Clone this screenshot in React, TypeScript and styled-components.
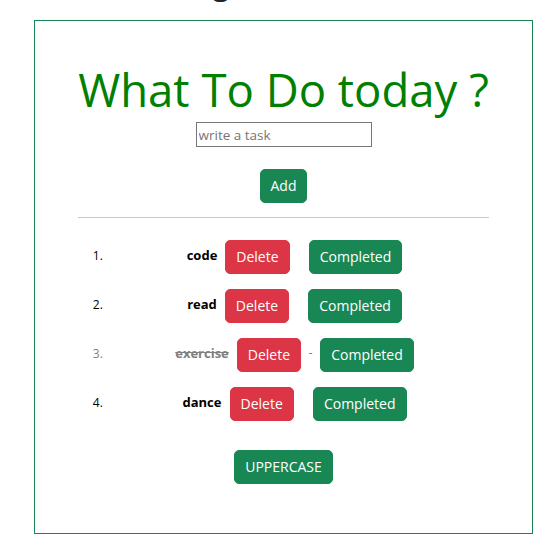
import React, { useState } from "react";
import styled, { createGlobalStyle } from "styled-components";

const GlobalStyle = createGlobalStyle`
  html, body {
    margin: 0;
    padding: 0;
    background: #ffffff;
    overflow: hidden;
  }
  body {
    font-family: "Open Sans", "Noto Sans", sans-serif;
    color: #212529;
  }
`;

const Page = styled.div`
  width: 560px;
  height: 550px;
  overflow: hidden;
`;

const PageHeading = styled.h2`
  margin: -37px 0 19px;
  padding: 0 112px 0 34px;
  font-size: 32px;
  font-weight: 500;
  line-height: 38px;
  text-align: center;
  white-space: nowrap;
  color: #212529;
`;

const Card = styled.div`
  box-sizing: border-box;
  width: 499px;
  margin-left: 34px;
  padding: 0 43px 49px;
  border: 1px solid #198754;
`;

const Title = styled.h1`
  margin: 41px 0 0;
  font-size: 45.5px;
  font-weight: 400;
  line-height: 55px;
  text-align: center;
  white-space: nowrap;
  color: #008000;
`;

const InputRow = styled.div`
  display: flex;
  justify-content: center;
  margin-top: 5px;
`;

const TaskInput = styled.input`
  box-sizing: border-box;
  width: 176px;
  height: 25px;
  padding: 1px 2px;
  border: 1px solid #767676;
  border-radius: 0;
  font-family: "Open Sans", "Noto Sans", sans-serif;
  font-size: 13.5px;
  color: #212529;
  outline: none;
  &::placeholder {
    color: #757575;
  }
`;

const ButtonRow = styled.div<{ $top: number }>`
  display: flex;
  justify-content: center;
  margin-top: ${(p) => p.$top}px;
`;

const Button = styled.button<{ $variant?: "success" | "danger" }>`
  display: inline-block;
  box-sizing: border-box;
  padding: 6px 10px;
  border: 1px solid ${(p) => (p.$variant === "danger" ? "#dc3545" : "#198754")};
  border-radius: 5px;
  background: ${(p) => (p.$variant === "danger" ? "#dc3545" : "#198754")};
  color: #ffffff;
  font-family: "Open Sans", "Noto Sans", sans-serif;
  font-size: 14px;
  font-weight: 400;
  line-height: 20px;
  cursor: pointer;
`;

const RowButton = styled(Button)<{ $gap: "both" | "left" }>`
  margin: ${(p) => (p.$gap === "both" ? "0 8px" : "0 0 0 8px")};
  vertical-align: -2px;
  text-decoration: none;
`;

const Divider = styled.hr`
  margin: 14px 0 0;
  border: 0;
  border-top: 1px solid #c9c9c9;
  height: 0;
`;

const TaskList = styled.ol`
  margin: 20px 0 0;
  padding: 0 0 0 28px;
`;

const TaskItem = styled.li<{ $done: boolean }>`
  padding-right: 6px;
  font-size: 12px;
  line-height: 34px;
  text-align: center;
  color: ${(p) => (p.$done ? "#808080" : "#000000")};
  text-decoration: ${(p) => (p.$done ? "line-through" : "none")};
  & + & {
    margin-top: 13px;
  }
`;

const TaskName = styled.span`
  font-size: 13px;
  font-weight: 700;
`;

type Task = { id: number; text: string; done: boolean };

export default function App() {
  const [tasks, setTasks] = useState<Task[]>([
    { id: 1, text: "code", done: false },
    { id: 2, text: "read", done: false },
    { id: 3, text: "exercise", done: true },
    { id: 4, text: "dance", done: false },
  ]);
  const [value, setValue] = useState("");

  const add = () => {
    if (!value.trim()) return;
    setTasks((t) => [...t, { id: Date.now(), text: value, done: false }]);
    setValue("");
  };

  return (
    <Page>
      <GlobalStyle />
      <PageHeading>Things to Do</PageHeading>
      <Card>
        <Title>What To Do today ?</Title>
        <InputRow>
          <TaskInput
            placeholder="write a task"
            value={value}
            onChange={(e) => setValue(e.target.value)}
          />
        </InputRow>
        <ButtonRow $top={22}>
          <Button $variant="success" onClick={add}>
            Add
          </Button>
        </ButtonRow>
        <Divider />
        <TaskList>
          {tasks.map((t) => (
            <TaskItem key={t.id} $done={t.done}>
              <TaskName>{t.text}</TaskName>
              <RowButton
                $variant="danger"
                $gap="both"
                onClick={() => setTasks((all) => all.filter((x) => x.id !== t.id))}
              >
                Delete
              </RowButton>{" "}
              <RowButton
                $variant="success"
                $gap="left"
                onClick={() =>
                  setTasks((all) => all.map((x) => (x.id === t.id ? { ...x, done: !x.done } : x)))
                }
              >
                Completed
              </RowButton>
            </TaskItem>
          ))}
        </TaskList>
        <ButtonRow $top={29}>
          <Button
            $variant="success"
            onClick={() => setTasks((all) => all.map((x) => ({ ...x, text: x.text.toUpperCase() })))}
          >
            UPPERCASE
          </Button>
        </ButtonRow>
      </Card>
    </Page>
  );
}
